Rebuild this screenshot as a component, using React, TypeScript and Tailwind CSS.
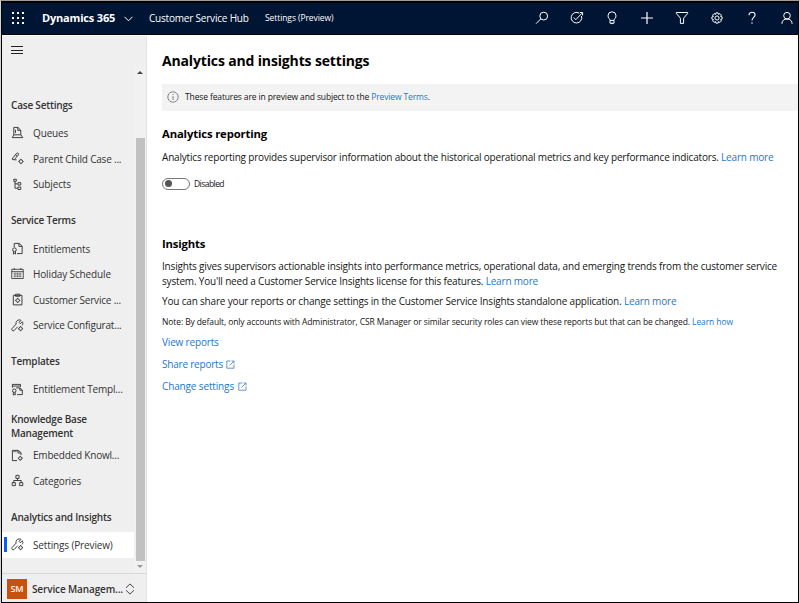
import type { ReactNode } from 'react';

function Icon({ children, size = 14, sw = 1 }: { children: ReactNode; size?: number; sw?: number }) {
  return (
    <svg width={size} height={size} viewBox="0 0 14 14" fill="none" stroke="currentColor" strokeWidth={sw} className="block shrink-0">
      {children}
    </svg>
  );
}

const topIcons: ReactNode[] = [
  <Icon><circle cx="8.7" cy="5.1" r="3.9" /><path d="M5.8 7.9 1 12.7" /></Icon>,
  <Icon><path d="M9.300 2.200A5.300 5.300 0 1 0 11.500 5" /><path d="M3.800 6.600 5.800 8.700l6.200-6.500M12.600 4.400V1.500H9.800" /></Icon>,
  <Icon><path d="M5 9.4C5 7.9 3 7.2 3 4.8a4 4 0 0 1 8 0c0 2.4-2 3.1-2 4.600zM5 9.400v2.800h4V9.400M6.200 12.600h1.600" /></Icon>,
  <Icon sw={1.2}><path d="M7 1v12M1 7h12" /></Icon>,
  <Icon><path d="M1.300 1.500h11.400v.9L8.600 7.200v5.200H5.400V7.200L1.300 2.400z" /></Icon>,
  <Icon><circle cx="7" cy="7" r="2.100" /><path d="M5.900 1.200h2.200l.4 1.500 1.400-.8 1.500 1.500-.8 1.400 1.500.4v2.200l-1.500.4.8 1.400-1.500 1.500-1.400-.8-.4 1.500H5.900l-.4-1.500-1.400.8-1.500-1.500.8-1.400-1.500-.4V5.200l1.500-.4-.8-1.400 1.500-1.500 1.400.8z" transform="translate(0 .7)" /></Icon>,
  <Icon sw={1.1}><path d="M4 4.200C4 2.300 5.300 1.300 7 1.300s3.100 1 3.100 2.800C10.100 6.300 7 6.500 7 9.400M7 11.300v1.400" /></Icon>,
  <Icon><circle cx="7" cy="4.700" r="3.300" /><path d="M1.900 12.800c0-3 2-4.800 5.100-4.800s5.100 1.800 5.100 4.800" /></Icon>,
];

const Queue = () => (
  <Icon size={13}><path d="M3 9.500V1.500h4.500L10.500 4.500v5M7.300 1.500v3.200h3.200M4.800 4v3.500M1.300 12.500h11.400l-2-3H3z" /></Icon>
);
const ParentChild = () => (
  <Icon size={13}><path d="M1.200 7.500 5.300 2.200 7 1l1.200.9-.8 1.900-4.100 4.600H6M4.800 3l1.800 1.400M1 7.700l2.300.7" /><circle cx="10.700" cy="10.200" r="1.900" /><path d="M10.700 7.300v1M10.700 12.100v1M7.900 10.200h.9M12.600 10.200h.9" /></Icon>
);
const Subjects = () => (
  <Icon size={13}><path d="M4.300 3.700v7.300h3M4.300 6.300h3M3 1.300h2.700v2.300H3zM7.500 5h3v2.600h-3zM7.500 9.700h3v2.700h-3z" /></Icon>
);
const Entitlement = () => (
  <Icon size={13}><path d="M3.500 5.500v-4h5.200l3.300 3v8H6.500M8.500 1.500v3.200H12" /><circle cx="3.700" cy="8.300" r="2" /><path d="M2.600 10v3l1.100-.7 1.100.7v-3" /></Icon>
);
const Calendar = () => (
  <Icon size={13} sw={0.9}><path d="M.8 2.500h12.400v9.900H.8zM.8 5h12.400M3.500 1v2.200M10.500 1v2.200" /><path strokeWidth=".5" d="M2.800 6.800h8.600M2.800 8.600h8.600M2.800 10.400h8.600M4.300 6v5M7 6v5M9.700 6v5" /></Icon>
);
const Clipboard = () => (
  <Icon size={13}><path d="M2.500 2.500h9.300v10.300H2.500zM4.800 1.300h4.700v2.200H4.800z" /><circle cx="7.200" cy="8" r="1.800" /><path d="M7.200 5.200v1M7.200 9.800v1M4.400 8h1M9 8h1" /></Icon>
);
const Wrench = () => (
  <Icon size={13}><path d="M9 1a3.500 3.500 0 0 0-3.500 4.500L1.200 10.200c-1.200 1.500.8 3.400 2.200 2.200l3.700-4M9 1c1 0 1.800.4 1.800.4L8.700 3.600 10 5l2.300-2c.7 1.300.6 2.700-.3 3.900" /><circle cx="10.300" cy="10.400" r="1.800" /><path d="M10.300 7.700v.9M10.300 12.200v.9M7.600 10.400h.9M12.100 10.400h.9" /></Icon>
);
const Template = () => (
  <Icon size={13}><path d="M1.500 5V1.500h8.700V4M1.500 3.300h8.700M5.500 5.300h4.200l2.500 2.300v4.900H6.500M9.500 5.300v2.500h2.700" /><circle cx="3.500" cy="8.300" r="1.900" /><path d="M2.500 10v3l1-.7 1 .7v-3" /></Icon>
);
const Embedded = () => (
  <Icon size={13}><path d="M6.500 12.500H1.500V1.500h6.300L10.800 4v2.500M7.500 1.500v2.800h3.300M3.200 1.500v2M5.300 1.500v2" /><circle cx="10" cy="10" r="1.700" /><path d="M10 7.400v.9M10 11.700v.9M7.400 10h.9M11.700 10h.9" /></Icon>
);
const Categories = () => (
  <Icon size={13}><path d="M5.300 1.500h3.400v3.200H5.300zM1.300 9.300h3.400v3.200H1.300zM9.300 9.300h3.400v3.200H9.300zM7 4.700V7M3 9.300V7h8v2.300" /></Icon>
);

type Item = { label: string; icon: ReactNode; active?: boolean };
const groups: { title: string; head: string; items: Item[] }[] = [
  {
    title: 'Case Settings', head: 'h-[31.200px] pt-[8.500px]',
    items: [
      { label: 'Queues', icon: <Queue /> },
      { label: 'Parent Child Case ...', icon: <ParentChild /> },
      { label: 'Subjects', icon: <Subjects /> },
    ],
  },
  {
    title: 'Service Terms', head: 'h-[38.500px] pt-[16px]',
    items: [
      { label: 'Entitlements', icon: <Entitlement /> },
      { label: 'Holiday Schedule', icon: <Calendar /> },
      { label: 'Customer Service ...', icon: <Clipboard /> },
      { label: 'Service Configurat...', icon: <Wrench /> },
    ],
  },
  {
    title: 'Templates', head: 'h-[38.500px] pt-[16px]',
    items: [{ label: 'Entitlement Templ...', icon: <Template /> }],
  },
  {
    title: 'Knowledge Base Management', head: 'h-[40.500px] pt-[10px]',
    items: [
      { label: 'Embedded Knowl...', icon: <Embedded /> },
      { label: 'Categories', icon: <Categories /> },
    ],
  },
  {
    title: 'Analytics and Insights', head: 'h-[38.500px] pt-[16px]',
    items: [{ label: 'Settings (Preview)', icon: <Wrench />, active: true }],
  },
];

function Sidebar() {
  return (
    <aside className="flex w-[145px] shrink-0 flex-col border-r border-[#e2e2e2] bg-[#efefef] text-[10px] text-[#333]">
      <div className="h-[30px] shrink-0 pl-[9px] pt-[10px]">
        <div className="flex h-[8px] w-3 flex-col justify-between">
          <i className="h-px bg-[#222]" />
          <i className="h-px bg-[#222]" />
          <i className="h-px bg-[#222]" />
        </div>
      </div>
      <div className="flex min-h-0 flex-1">
        <nav className="w-[132px] pt-[23px]">
          {groups.map((g) => (
            <section key={g.title}>
              <h3 className={`${g.head} w-[125px] pl-[9px] font-semibold leading-[14px] tracking-[-0.200px]`}>{g.title}</h3>
              {g.items.map((it) => (
                <div key={it.label} className={`flex h-[25.600px] items-center whitespace-nowrap ${it.active ? 'bg-white' : ''}`}>
                  <span className={`ml-[2px] h-[15px] w-[3px] ${it.active ? 'bg-[#0a5cff]' : ''}`} />
                  <span className="ml-[4px] w-[22px]">{it.icon}</span>
                  <span className={`pt-[1.500px] ${it.label.endsWith('...') ? 'tracking-[-0.200px]' : 'tracking-[-0.140px]'}`}>{it.label}</span>
                </div>
              ))}
            </section>
          ))}
        </nav>
        <div className="flex w-[12px] flex-col items-center bg-[#f1f1f1]">
          <i className="mt-[5px] h-0 w-0 border-x-[3px] border-b-[3px] border-x-transparent border-b-[#444]" />
          <i className="mt-[64px] h-[423px] w-[9px] bg-[#c1c1c1]" />
          <i className="mt-[4px] h-0 w-0 border-x-[3px] border-t-[3px] border-x-transparent border-t-[#999]" />
        </div>
      </div>
      <div className="flex h-[29px] shrink-0 items-center border-t border-[#d8d8d8] pl-[5px]">
        <span className="mt-px flex h-5 w-5 items-center justify-center bg-[#c8510e] text-[9px] font-semibold text-white">SM</span>
        <span className="ml-[5px] w-[93px] whitespace-nowrap pt-[2px] font-semibold tracking-[-0.130px]">Service Managem...</span>
        <svg width="10" height="12" viewBox="0 0 10 12" fill="none" stroke="#444" className="mt-px"><path d="M1 4.800 5 .9l4 3.900M1 7.200l4 3.900 4-3.900" /></svg>
      </div>
    </aside>
  );
}

function Link({ children }: { children: ReactNode }) {
  return <a className="text-[#1a78d0]">{children}</a>;
}

function External() {
  return (
    <svg width="9" height="9" viewBox="0 0 9 9" fill="none" stroke="#5b86c8" strokeWidth=".9"><path d="M4.500 1H.8v7.200h7.200V4.500M5.500 1H8v2.500M8 1 3.500 5.500" /></svg>
  );
}

function Main() {
  return (
    <main className="min-w-0 flex-1 whitespace-nowrap bg-white pl-[15px] text-[10px] leading-[15px] tracking-[-0.185px] text-[#151515]">
      <h1 className="mt-[15px] h-5 text-[14px] font-bold leading-5 tracking-[-0.150px] text-black">Analytics and insights settings</h1>
      <div className="mt-[13px] flex h-[27px] items-center bg-[#f3f3f3] pl-[5px] text-[8.500px] tracking-[-0.130px]">
        <svg width="12" height="12" viewBox="0 0 12 12" fill="none" stroke="#777" strokeWidth=".9" className="mb-[2px]"><circle cx="6" cy="6" r="5.200" /><path d="M6 5v4M6 3v1" /></svg>
        <p className="mb-[2px] ml-[6px]">These features are in preview and subject to the <Link>Preview Terms</Link>.</p>
      </div>
      <h2 className="mt-[15px] h-4 text-[11.300px] font-bold leading-4 tracking-[-0.150px] text-black">Analytics reporting</h2>
      <p className="mt-[8px]">Analytics reporting provides supervisor information about the historical operational metrics and key performance indicators. <Link>Learn more</Link></p>
      <div className="mt-[12px] flex h-[13px] items-center">
        <span className="flex h-[12px] w-[28px] items-center rounded-full border border-[#777] pl-[2px]"><i className="h-[7px] w-[7px] rounded-full bg-[#555]" /></span>
        <span className="ml-[4px] text-[8.500px] tracking-[-0.550px]">Disabled</span>
      </div>
      <h2 className="mt-[46px] h-4 text-[11.300px] font-bold leading-4 tracking-[-0.180px] text-black">Insights</h2>
      <p className="mt-[7px] leading-[14.500px] tracking-[-0.177px]">
        Insights gives supervisors actionable insights into performance metrics, operational data, and emerging trends from the customer service<br />
        system. You'll need a Customer Service Insights license for this features. <Link>Learn more</Link>
      </p>
      <p className="mt-[6px] tracking-[-0.175px]">You can share your reports or change settings in the Customer Service Insights standalone application. <Link>Learn more</Link></p>
      <p className="mt-[5px] text-[8.500px] tracking-[-0.105px]">Note: By default, only accounts with Administrator, CSR Manager or similar security roles can view these reports but that can be changed. <Link>Learn how</Link></p>
      <p className="mt-[6px] tracking-[-0.170px]"><Link>View reports</Link></p>
      <p className="mt-[7px] flex items-center gap-[3px] tracking-[-0.210px]"><Link>Share reports</Link><External /></p>
      <p className="mt-[7px] flex items-center gap-[4px] tracking-[-0.140px]"><Link>Change settings</Link><External /></p>
    </main>
  );
}

export default function App() {
  return (
    <div className="h-[603px] w-[800px] overflow-hidden border-l border-r border-t border-l-[#d5d5d5] border-r-[#d5d5d5] border-t-[#9b9f9f] font-['Open_Sans','Noto_Sans',sans-serif]">
      <div className="flex h-full flex-col border border-t-2 border-black">
        <header className="flex h-[32px] shrink-0 items-center whitespace-nowrap border-b border-black bg-[#001433] text-white">
          <svg width="12" height="12" viewBox="0 0 12 12" fill="white" className="mb-[2px] ml-[10px]">
            {[0, 5, 10].map((y) => [0, 5, 10].map((x) => <rect key={`${x}-${y}`} x={x} y={y} width="2" height="2" />))}
          </svg>
          <span className="ml-[18px] w-[82px] text-[11px] font-bold tracking-[-0.180px]">Dynamics 365</span>
          <svg width="9" height="6" viewBox="0 0 9 6" fill="none" stroke="white"><path d="m.5.800 4 4 4-4" /></svg>
          <span className="ml-[16px] w-[116px] text-[10px] tracking-[-0.200px]">Customer Service Hub</span>
          <span className="text-[8.500px] tracking-[-0.080px]">Settings (Preview)</span>
          <div className="mb-[2px] ml-auto flex w-[263px]">
            {topIcons.map((icon, i) => <span key={i} className="w-[35px] shrink-0">{icon}</span>)}
          </div>
        </header>
        <div className="flex min-h-0 flex-1 border-t border-white">
          <Sidebar />
          <Main />
        </div>
      </div>
    </div>
  );
}
